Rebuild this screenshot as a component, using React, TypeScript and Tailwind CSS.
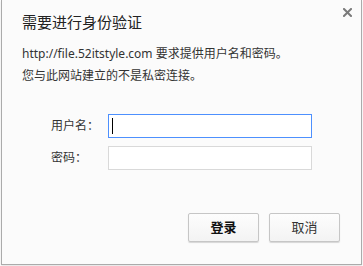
import React from "react";

export default function App() {
  const font = { fontFamily: '"Noto Sans", "Noto Sans CJK SC", sans-serif' };
  return (
    <div className="w-[363px] h-[266px] bg-white overflow-hidden" style={font}>
      <div className="ml-[1px] w-[361px] h-[265px] bg-[#fbfbfb] border-l border-r border-b border-[#ababab] shadow-[0_1px_2px_rgba(0,0,0,0.12)] flex flex-col">
        <div className="flex justify-between items-start pl-[20px] pr-[9px] pt-[8px]">
          <div className="mt-[4px] text-[15px] leading-[20px] text-[#222]">需要进行身份验证</div>
          <svg width="9" height="9" viewBox="0 0 9 9" className="shrink-0">
            <path d="M1 1 L8 8 M8 1 L1 8" stroke="#7a7a7a" strokeWidth="2" strokeLinecap="square" />
          </svg>
        </div>
        <div className="mt-[11px] pl-[20px] text-[12px] leading-[22px] text-[#333]">
          <div>http://file.52itstyle.com 要求提供用户名和密码。</div>
          <div>您与此网站建立的不是私密连接。</div>
        </div>
        <div className="mt-[27px] pl-[49px] flex flex-col gap-[8px] text-[12px] text-[#333]">
          <div className="flex items-center">
            <div className="w-[57px]">用户名：</div>
            <div className="w-[204px] h-[24px] bg-white border border-[#4d90fe] flex items-center">
              <span className="ml-[3px] w-px h-[16px] bg-black" />
            </div>
          </div>
          <div className="flex items-center">
            <div className="w-[57px]">密码：</div>
            <div className="w-[204px] h-[24px] bg-white border border-[#d9d9d9]" />
          </div>
        </div>
        <div className="mt-[43px] pr-[21px] flex justify-end gap-[10px] text-[13px]">
          <div className="w-[71px] h-[29px] rounded-[2px] border border-[#c6c6c6] bg-gradient-to-b from-[#fdfdfd] to-[#f3f3f3] shadow-[0_1px_1px_rgba(0,0,0,0.15)] flex items-center justify-center font-bold text-[#111]">
            登录
          </div>
          <div className="w-[71px] h-[29px] rounded-[2px] border border-[#c6c6c6] bg-gradient-to-b from-[#fdfdfd] to-[#f3f3f3] shadow-[0_1px_1px_rgba(0,0,0,0.15)] flex items-center justify-center text-[#333]">
            取消
          </div>
        </div>
      </div>
    </div>
  );
}
